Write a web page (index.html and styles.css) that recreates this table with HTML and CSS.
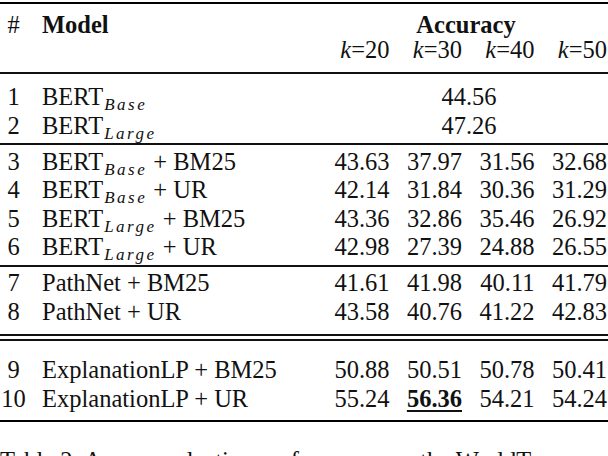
FILE: index.html
```html
<!DOCTYPE html>
<html lang="en">
<head>
<meta charset="utf-8">
<title>Table 2</title>
<link rel="stylesheet" href="styles.css">
</head>
<body>
<div class="tbl">
  <div class="group head">
    <div class="row row-h1">
      <span class="idx">#</span>
      <span class="model b">Model</span>
      <span class="span4 b">Accuracy</span>
    </div>
    <div class="row">
      <span class="idx"></span>
      <span class="model"></span>
      <span class="num"><i>k</i>=20</span>
      <span class="num"><i>k</i>=30</span>
      <span class="num"><i>k</i>=40</span>
      <span class="num"><i>k</i>=50</span>
    </div>
  </div>
  <div class="group g1">
    <div class="row">
      <span class="idx">1</span>
      <span class="model">BERT<sub class="sub">Base</sub></span>
      <span class="span4 c">44.56</span>
    </div>
    <div class="row">
      <span class="idx">2</span>
      <span class="model">BERT<sub class="sub">Large</sub></span>
      <span class="span4 c">47.26</span>
    </div>
  </div>
  <div class="group g2">
    <div class="row">
      <span class="idx">3</span>
      <span class="model">BERT<sub class="sub">Base</sub> + BM25</span>
      <span class="num">43.63</span><span class="num">37.97</span><span class="num">31.56</span><span class="num">32.68</span>
    </div>
    <div class="row">
      <span class="idx">4</span>
      <span class="model">BERT<sub class="sub">Base</sub> + UR</span>
      <span class="num">42.14</span><span class="num">31.84</span><span class="num">30.36</span><span class="num">31.29</span>
    </div>
    <div class="row">
      <span class="idx">5</span>
      <span class="model">BERT<sub class="sub">Large</sub> + BM25</span>
      <span class="num">43.36</span><span class="num">32.86</span><span class="num">35.46</span><span class="num">26.92</span>
    </div>
    <div class="row">
      <span class="idx">6</span>
      <span class="model">BERT<sub class="sub">Large</sub> + UR</span>
      <span class="num">42.98</span><span class="num">27.39</span><span class="num">24.88</span><span class="num">26.55</span>
    </div>
  </div>
  <div class="group g3">
    <div class="row">
      <span class="idx">7</span>
      <span class="model">PathNet + BM25</span>
      <span class="num">41.61</span><span class="num">41.98</span><span class="num">40.11</span><span class="num">41.79</span>
    </div>
    <div class="row">
      <span class="idx">8</span>
      <span class="model">PathNet + UR</span>
      <span class="num">43.58</span><span class="num">40.76</span><span class="num">41.22</span><span class="num">42.83</span>
    </div>
  </div>
  <div class="double"></div>
  <div class="group g4">
    <div class="row">
      <span class="idx">9</span>
      <span class="model">ExplanationLP + BM25</span>
      <span class="num">50.88</span><span class="num">50.51</span><span class="num">50.78</span><span class="num">50.41</span>
    </div>
    <div class="row">
      <span class="idx">10</span>
      <span class="model">ExplanationLP + UR</span>
      <span class="num">55.24</span><span class="num"><span class="best">56.36</span></span><span class="num">54.21</span><span class="num">54.24</span>
    </div>
  </div>
</div>
<p class="caption">Table 2: Answer selection performance on the WorldTree</p>
</body>
</html>
```
FILE: styles.css
```css
html, body {
  margin: 0;
  padding: 0;
  background: #fff;
}
body {
  width: 608px;
  height: 456px;
  overflow: hidden;
  font-family: "Liberation Serif", "Times New Roman", serif;
  font-size: 24.5px;
  color: #111;
}
.tbl {
  padding-top: 2px;
}
.group {
  border-top: 2px solid #111;
}
.head {
  border-top-color: #000;
  padding-top: 8.7px;
  padding-bottom: 8px;
}
.g1 {
  padding-top: 9px;
  padding-bottom: 3px;
}
.g2, .g3 {
  padding-top: 2.5px;
  padding-bottom: 3px;
}
.g3 {
  padding-bottom: 8px;
}
.double {
  height: 3px;
  border-top: 2px solid #111;
}
.g4 {
  padding-top: 15px;
  padding-bottom: 7px;
  border-bottom: 2px solid #000;
}
.row {
  display: grid;
  grid-template-columns: 27px 1fr repeat(4, 72.5px);
  padding-right: 1px;
  height: 28.5px;
  line-height: 28.5px;
  white-space: nowrap;
}
.row-h1 {
  height: 23px;
  line-height: 23px;
}
.idx {
  text-align: center;
}
.model {
  padding-left: 15px;
}
.num {
  text-align: right;
}
.span4 {
  grid-column: 3 / span 4;
  text-align: center;
  padding-left: 8px;
}
.c {
  padding-left: 14px;
}
.b {
  font-weight: bold;
}
.sub {
  font-style: italic;
  font-size: 17px;
  letter-spacing: 2.5px;
  vertical-align: -5px;
  line-height: 0;
  padding-left: 1px;
}
.best {
  font-weight: bold;
  text-decoration: underline;
  text-decoration-thickness: 2px;
  text-underline-offset: 3px;
}
.caption {
  margin: 25px 0 0;
  line-height: 28px;
  white-space: nowrap;
}
```
